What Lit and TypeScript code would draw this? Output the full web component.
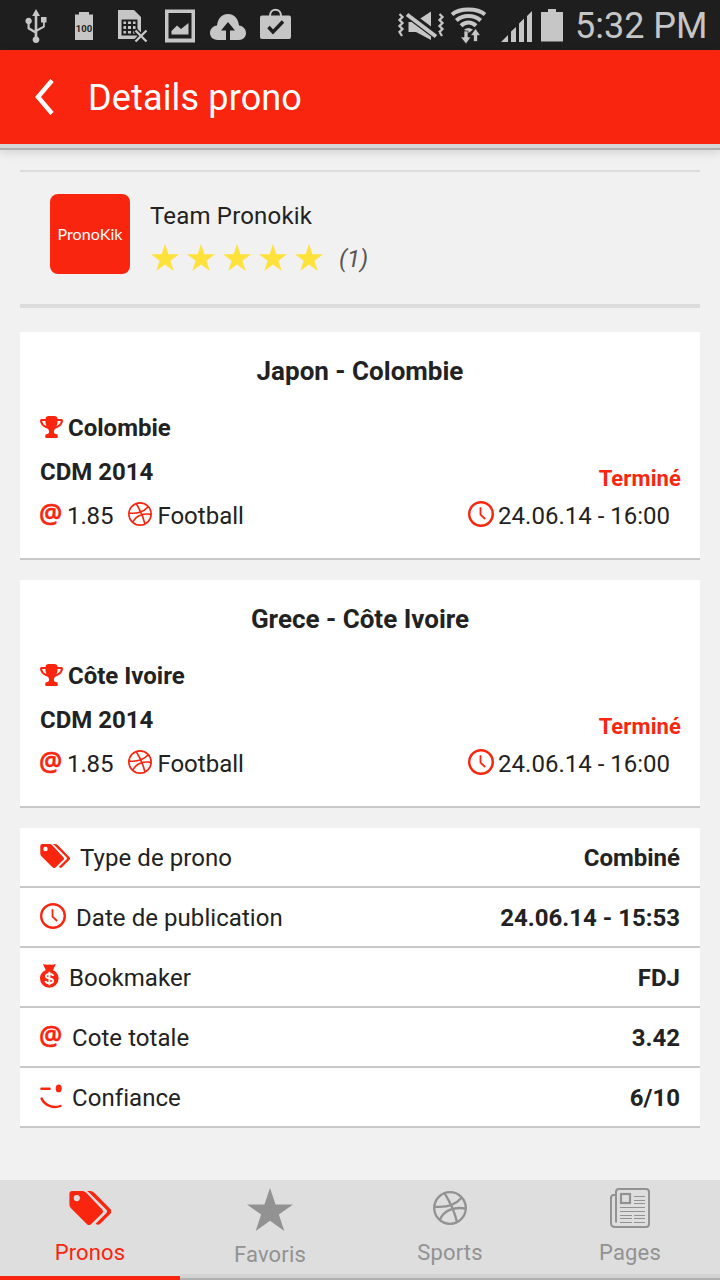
import { LitElement, html, svg, css } from "lit";
import { customElement } from "lit/decorators.js";

const STAR = "M14 0L17.4 10.3H28L19.4 16.7L22.7 27L14 20.6L5.3 27L8.6 16.7L0 10.3H10.6Z";

const star = (cls: string) => html`<svg class=${cls} viewBox="0 0 28 27" preserveAspectRatio="none"><path d=${STAR} fill="currentColor" /></svg>`;

const tags = (w: number, h: number) => html`<svg width=${w} height=${h} viewBox="0 0 42.5 34" preserveAspectRatio="none" fill="currentColor">
  <path fill-rule="evenodd" d="M3.2 0H13.5Q15.5 0 17 1.5L33.2 18.6Q34.8 20.4 33.2 22.2L22 33.2Q20 35 18 33.2L2 17.2Q.4 15.6 .4 13.5V3Q.4 0 3.2 0ZM7.8 4A3.1 3.1 0 1 0 7.8 10.2A3.1 3.1 0 1 0 7.8 4Z" />
  <path d="M18 0H21.5Q23.5 0 25 1.5L41.8 18.6Q43.3 20.4 41.8 22.2L31 33Q29 34.8 26.6 32.7L37.4 22Q38.8 20.4 37.4 18.8L20 1.4Z" />
</svg>`;

const ball = (size: number) => html`<svg width=${size} height=${size} viewBox="0 0 34 34" fill="none" stroke="currentColor" stroke-width="2.3">
  <circle cx="17" cy="17" r="15.8" />
  <path d="M11.5 2.2C17 11 21.5 20 24 31.2M1 15.6C12 16.8 22 14.5 28.8 6.5M6.8 29C11 18.5 22 15.6 33 17.6" />
</svg>`;

const clock = () => html`<svg width="26" height="26" viewBox="0 0 26 26" fill="none" stroke="currentColor">
  <circle cx="13" cy="13" r="11.8" stroke-width="2.4" /><path d="M12.5 6.3V13.7L17.2 18" stroke-width="1.8" />
</svg>`;

const trophy = () => html`<svg width="23" height="22" viewBox="0 0 23 22" fill="currentColor">
  <path d="M5.6 2Q6.2 0 8.4 0H14.6Q16.8 0 17.4 2V3H21.6Q23 3 23 4.6C22.8 8.6 20 11.6 15.5 12.4C14.5 13.4 13.9 14.2 13.9 15.4C13.9 17 14.4 17.8 16 18Q17.8 18.3 17.8 19.8V21Q17.8 22 16.8 22H6.2Q5.2 22 5.2 21V19.8Q5.2 18.3 7 18C8.6 17.8 9.1 17 9.1 15.4C9.1 14.2 8.5 13.4 7.5 12.4C3 11.6 .2 8.6 0 4.6Q0 3 1.4 3H5.6ZM5.4 5H2.2C2.5 7.6 4.2 9.4 6.5 10Q5.4 7.6 5.4 5ZM17.6 5Q17.6 7.6 16.5 10C18.8 9.4 20.5 7.6 20.8 5Z" fill-rule="evenodd" />
</svg>`;

const bag = () => html`<svg width="19" height="24" viewBox="0 0 19 24">
  <path d="M3 0Q6 1 9.3 .6Q12.5 1 15.8 0L13 6.3C16.5 7.6 18.6 10.7 18.6 14.4A9.3 9.3 0 0 1 0 14.4C0 10.7 2.2 7.6 5.8 6.3Z" fill="currentColor" />
  <path d="M13.2 11.8C12.8 9.6 5.9 9 5.9 12.2C5.9 15.2 13.2 13.6 13.2 16.9C13.2 20.2 5.7 19.8 5.4 16.8M9.4 7.8V21.2" fill="none" stroke="#fff" stroke-width="1.9" />
</svg>`;

const wink = () => html`<svg width="22" height="25" viewBox="0 0 22 25" fill="none" stroke="currentColor" stroke-width="2.4" stroke-linecap="round">
  <path d="M1.4 4.7H9.6M1.6 14.6C5 21.5 13 24.8 20.4 22" /><ellipse cx="18.7" cy="4.4" rx="3" ry="3.9" fill="currentColor" stroke="none" />
</svg>`;

const paper = () => html`<svg width="40" height="40" viewBox="0 0 40 40" fill="none" stroke="currentColor" stroke-width="2">
  <path d="M6 34.5V4Q6 1 9 1H36Q39 1 39 4V36Q39 39 36 39H5Q1 39 1 35V10Q1 7 4 7H6" />
  <rect x="11" y="6" width="9" height="9" stroke-width="2.2" />
  <path d="M24 8.5H35M24 12.5H35M24 15.5H35M10 19.5H35M10 23.5H35M10 27.5H22M24 27.5H35M10 30.5H22M24 30.5H35M10 34.5H22M24 34.5H35" stroke-width="1.2" />
</svg>`;

const at = () => html`<span class="at">@</span>`;

const barIcon = (x: number, w: number, body: unknown) => html`<svg width=${w} height="50" viewBox="${x} 0 ${w} 50" fill="#c6c6c6">${body}</svg>`;

@customElement("app-root")
export class AppRoot extends LitElement {
  static styles = css`
    :host { display: flex; flex-direction: column; height: 1280px; background: #f1f1f1; color: #222; font: 24px/44px Roboto, sans-serif; font-variant-ligatures: none; overflow: hidden; }
    * { box-sizing: border-box; }
    svg { display: block; flex: none; }
    .red { color: #f9250f; }
    .status { display: flex; height: 50px; background: #1e1e1e; flex: none; }
    .gap { flex: 1; }
    .time { font-size: 36px; line-height: 53px; color: #c6c6c6; width: 145px; white-space: nowrap; }
    .head { height: 100px; flex: none; display: flex; align-items: center; background: #f9250f; color: #fff; border-bottom: 2px solid #b0b0b0; box-shadow: inset 0 -4px #d6d6d6, 0 2px 10px rgba(0,0,0,.14); padding: 0 34px 4px; gap: 33px; }
    .title { font-size: 36px; letter-spacing: .15px; padding-top: 2px; }
    .main { padding: 20px 20px 0; height: 1030px; flex: none; }
    .team { height: 138px; border-top: 2px solid #dcdcdc; border-bottom: 4px solid #dcdcdc; padding: 22px 30px; display: flex; gap: 20px; margin-bottom: 24px; }
    .logo { width: 80px; height: 80px; border-radius: 8px; background: #f9250f; color: #fff; text-align: center; font: 16px/80px Lato, sans-serif; letter-spacing: .1px; }
    .name { line-height: 44px; letter-spacing: .18px; }
    .rating { display: flex; align-items: center; gap: 8px; height: 39px; padding-left: 1px; }
    .star { width: 28px; height: 27px; color: #ffe13c; }
    .count { font-style: italic; color: #555; margin-left: 8px; padding-top: 3px; }
    .card { background: #fff; border-bottom: 2px solid #c8c8c8; height: 228px; padding: 4px 20px 0; margin-bottom: 20px; }
    .match { text-align: center; font-weight: 700; font-size: 26px; line-height: 70px; }
    .line { display: flex; height: 44px; align-items: center; white-space: nowrap; }
    .line b { font-weight: 700; }
    .line .trophy { margin: 0 5px 2px 0; }
    .state { margin-left: auto; font-size: 22px; font-weight: 700; padding-top: 14px; letter-spacing: .1px; margin-right: -1px; }
    .at { font: 600 26px/24px "Open Sans", sans-serif; width: 22px; color: #f9250f; display: block; -webkit-text-stroke: .5px #f9250f; transform: translate(-1px, -2px) scaleY(1.06); }
    .odds { margin: 0 15px 0 5px; letter-spacing: -.1px; }
    .sport { margin-left: 5px; }
    .when { margin-left: auto; display: flex; align-items: center; gap: 4px; padding-right: 10px; }
    .up { margin-bottom: 4px; }
    .row { display: flex; align-items: center; height: 60px; background: #fff; border-bottom: 2px solid #c8c8c8; padding: 2px 20px 0; }
    .row b { margin-left: auto; }
    .icon { margin-right: 10px; margin-bottom: 4px; }
    .label { letter-spacing: .06px; }
    .tabs { display: grid; grid-template-columns: repeat(4, 1fr); height: 100px; background: #dedede; flex: none; }
    .tab { display: flex; flex-direction: column; align-items: center; color: #929292; font-size: 22px; line-height: 26px; letter-spacing: .15px; border-bottom: 2px solid #b0b0b0; box-shadow: inset 0 -4px #d3d3d3; }
    .tab.on { color: #f9250f; border-bottom: 4px solid #f9250f; box-shadow: none; }
    .pic { height: 60px; padding-top: 11px; }
    .pic.high { padding-top: 8px; }
    .pic.fav { height: 62px; }
    .big { width: 46px; height: 43px; }
  `;

  private card(title: string, pick: string) {
    return html`<section class="card">
      <div class="match">${title}</div>
      <div class="line"><span class="red trophy">${trophy()}</span><b>${pick}</b></div>
      <div class="line"><b>CDM 2014</b><span class="state red">Terminé</span></div>
      <div class="line">
        <span class="up">${at()}</span><span class="odds">1.85</span>
        <span class="red up">${ball(24)}</span><span class="sport">Football</span>
        <span class="when"><span class="red up">${clock()}</span><span>24.06.14 - 16:00</span></span>
      </div>
    </section>`;
  }

  private row(icon: unknown, label: string, value: string) {
    return html`<div class="row"><span class="icon red">${icon}</span><span class="label">${label}</span><b>${value}</b></div>`;
  }

  render() {
    return html`
      <div class="status">
        ${barIcon(0, 60, svg`<path d="M36 9L40 16H37.3V29L43 26V22.5H41V17H46.5V22.5H44.8V27.3L37.3 31.5V36.5A3.4 3.4 0 1 1 34.7 36.5V33.2L27.5 29V24A3.2 3.2 0 1 1 29.7 24V27.6L34.7 30.5V16H32.2Z"/>`)}
        ${barIcon(60, 45, svg`<path d="M79 12H89V14.5H93V40H75V14.5H79Z"/><text x="84" y="31.5" text-anchor="middle" font-family="Roboto" font-size="9.5" font-weight="700" fill="#1e1e1e">100</text>`)}
        ${barIcon(105, 50, svg`<path d="M118 10H134L141 17V32L136 39H118Z"/><path d="M122.5 20.5H136.5V34.5H122.5ZM122.5 25H136.5M122.5 30H136.5M127 20.5V34.5M132 20.5V34.5" fill="none" stroke="#1e1e1e" stroke-width="1.9"/><path d="M135 30L147 42M147 30L135 42" stroke="#1e1e1e" stroke-width="5"/><path d="M135.5 30.5L146.5 41.5M146.5 30.5L135.5 41.5" stroke="#c6c6c6" stroke-width="2.4"/>`)}
        ${barIcon(155, 50, svg`<path fill-rule="evenodd" d="M165 9.5H195V42.5H165ZM168.5 13V38.5H191.5V13Z"/><path d="M171.5 34.5V31L177 25.5L181 29L188.5 23V34.5Z"/>`)}
        ${barIcon(205, 47, svg`<path d="M218 40C212 40 210 36 210 33C210 29 213 26 217 25.5C218 18 222 14 228 14C234 14 238 18 239 25.5C243 26 246 29 246 33C246 37 243 40 239 40Z"/><path d="M228 22L235 30.5H230V40H226V30.5H221Z" fill="#1e1e1e"/>`)}
        ${barIcon(252, 50, svg`<path d="M262 15.5H289Q291 15.5 291 17.5V37Q291 39 289 39H262Q260 39 260 37V17.5Q260 15.5 262 15.5Z"/><path d="M270 16C270 7.5 281 7.5 281 16" fill="none" stroke="#c6c6c6" stroke-width="2"/><path d="M268.5 27L273 32L283 21.5" fill="none" stroke="#1e1e1e" stroke-width="3.4"/>`)}
        <span class="gap"></span>
        ${barIcon(390, 57, svg`<path d="M399.5 14L402.5 17L399.5 20L402.5 23L399.5 26L402.5 29L399.5 32L402 36M439.5 14L442.5 17L439.5 20L442.5 23L439.5 26L442.5 29L439.5 32L442 36" fill="none" stroke="#c6c6c6" stroke-width="2.3"/><path d="M408.5 22H415L431 11.5V40L416 32H408.5Z"/><path d="M407 13.5L437 36" stroke="#1e1e1e" stroke-width="8"/><path d="M407 14.5L436 36.5" stroke="#c6c6c6" stroke-width="4"/>`)}
        ${barIcon(447, 45, svg`<g fill="none" stroke="#c6c6c6" stroke-width="4"><path d="M452 14.5C460 7.8 477 7.8 485 14.5M456.3 20.4C463 14.4 474 14.4 480.7 20.4M461 25.8C465.5 21.5 471.5 21.5 476 25.8"/></g><path d="M464 29.8Q468.5 26 473 29.8L468.5 33Z"/><path d="M464 31H468V37H471L466 44L460.5 37H464ZM473.5 41.5V35.5H470.5L475.5 28.5L480.5 35.5H477.5V41.5Z" stroke="#1e1e1e" stroke-width=".7"/>`)}
        ${barIcon(492, 43, svg`<path d="M501 42L508 35V42ZM511 42V31.5L516 27V42ZM519 42V23.5L524 18.5V42ZM527 42V16L532 11V42Z"/>`)}
        ${barIcon(535, 40, svg`<path d="M548 9H556V12H563V41.5H541V12H548Z"/>`)}
        <span class="time">5:32 PM</span>
      </div>
      <header class="head">
        <svg width="21" height="36" viewBox="0 0 21 36" fill="none" stroke="#fff" stroke-width="4.4"><path d="M18 1.5L4 18L18 34.5" /></svg>
        <span class="title">Details prono</span>
      </header>
      <main class="main">
        <section class="team">
          <div class="logo">PronoKik</div>
          <div>
            <div class="name">Team Pronokik</div>
            <div class="rating">${[0, 1, 2, 3, 4].map(() => star("star"))}<span class="count">(1)</span></div>
          </div>
        </section>
        ${this.card("Japon - Colombie", "Colombie")}
        ${this.card("Grece - Côte Ivoire", "Côte Ivoire")}
        ${this.row(tags(30, 24), "Type de prono", "Combiné")}
        ${this.row(clock(), "Date de publication", "24.06.14 - 15:53")}
        ${this.row(bag(), "Bookmaker", "FDJ")}
        ${this.row(at(), "Cote totale", "3.42")}
        ${this.row(wink(), "Confiance", "6/10")}
      </main>
      <nav class="tabs">
        <div class="tab on"><span class="pic">${tags(42.5, 34)}</span>Pronos</div>
        <div class="tab"><span class="pic fav high">${star("big")}</span>Favoris</div>
        <div class="tab"><span class="pic">${ball(34)}</span>Sports</div>
        <div class="tab"><span class="pic high">${paper()}</span>Pages</div>
      </nav>`;
  }
}
